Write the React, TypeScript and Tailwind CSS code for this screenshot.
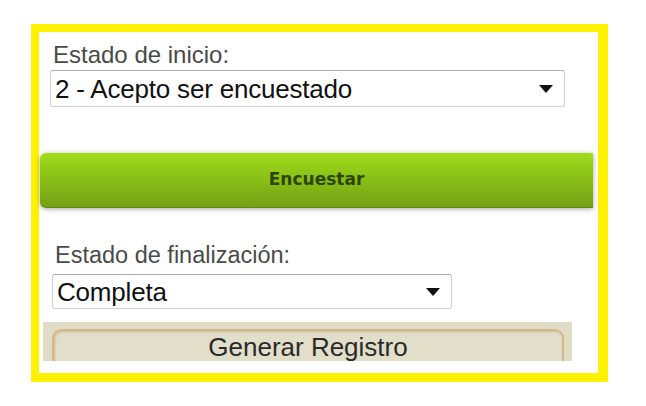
import React from "react";

function Arrow() {
  return (
    <svg width="14" height="8" viewBox="0 0 14 8" className="shrink-0">
      <path d="M0 0 H14 L7 8 Z" fill="#111" />
    </svg>
  );
}

function FakeSelect({ value, className }: { value: string; className: string }) {
  return (
    <div
      className={`flex items-center justify-between rounded-[3px] border border-[#cdd0d8] border-t-[#aeaeb6] bg-white pl-[4px] pr-[11px] ${className}`}
    >
      <span className="text-[26px] leading-none tracking-[-0.2px] text-[#111]">{value}</span>
      <Arrow />
    </div>
  );
}

export default function App() {
  return (
    <div
      className="min-h-[406px] bg-white pl-[31px] pt-[24px]"
      style={{ fontFamily: '"Liberation Sans", Arial, sans-serif' }}
    >
      <div className="flex h-[358px] w-[577px] flex-col border-t-8 border-r-[10px] border-b-[9px] border-l-8 border-[#fff200] bg-white">
        <div className="ml-[14px] mt-[9px] text-[24px] leading-[28px] text-[#4a4a4a]">
          Estado de inicio:
        </div>
        <FakeSelect
          value="2 - Acepto ser encuestado"
          className="ml-[11px] mt-px h-[37px] w-[515px]"
        />

        <div className="ml-px mt-[46px] flex h-[55px] w-[553px] items-center justify-center rounded-l-[6px] border-b border-[#5f8c0f] bg-gradient-to-b from-[#a0dd1c] to-[#73a013] shadow-[0_1px_5px_rgba(0,0,0,0.35)]">
          <span
            className="text-[17px] font-bold text-[#2b4606]"
            style={{ fontFamily: '"DejaVu Sans", Verdana, sans-serif' }}
          >
            Encuestar
          </span>
        </div>

        <div className="ml-[16px] mt-[33px] text-[23.5px] leading-[28px] text-[#4a4a4a]">
          Estado de finalización:
        </div>
        <FakeSelect value="Completa" className="ml-[13px] mt-[5px] h-[35px] w-[400px]" />

        <div className="ml-[4px] mt-[13px] h-[39px] w-[529px] overflow-hidden bg-[#e0ddc6] pl-[9px] pr-[8px] pt-[7px]">
          <div className="flex h-[40px] justify-center rounded-t-[9px] border-2 border-b-0 border-[#d6b68b] bg-[#e1dfc9] pt-[2px] shadow-[inset_1px_1px_2px_rgba(190,150,100,0.5)]">
            <span className="text-[26px] leading-[28px] text-[#2a2a2a]">Generar Registro</span>
          </div>
        </div>
      </div>
    </div>
  );
}
